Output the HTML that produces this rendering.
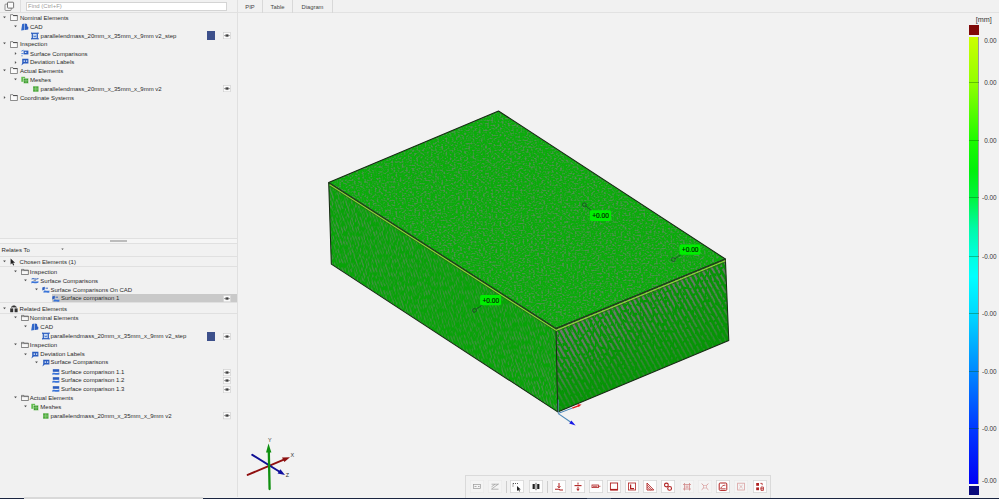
<!DOCTYPE html>
<html><head><meta charset="utf-8"><title>Inspection</title>
<style>
html,body{margin:0;padding:0}
body{width:999px;height:499px;overflow:hidden;position:relative;background:#f2f2f2;font-family:"Liberation Sans",sans-serif;font-size:6px;color:#222}
.ab{position:absolute;display:block}
.t{position:absolute;white-space:nowrap;font-size:6px;line-height:9px;height:9px;color:#2a2a2a}
.lt{position:absolute;left:976px;width:20.6px;text-align:right;font-size:6.4px;line-height:8px;height:8px;color:#333;white-space:nowrap}
#left{position:absolute;left:0;top:0;width:237px;height:497px;background:#f1f1f1;border-right:1px solid #e0e0e0;box-sizing:content-box}
.hl{position:absolute;left:0;width:237px;height:1px;background:#e0e0e0}
.tab{position:absolute;top:0;height:12.5px;line-height:14px;font-size:5.8px;text-align:center;color:#444;border-right:1px solid #d8d8d8;box-sizing:border-box}
</style></head><body>
<div id="left"></div>
<!-- top search -->
<svg class="ab" style="left:3.5px;top:1px" width="11" height="11" viewBox="0 0 11 11"><rect x="1" y="3.1" width="6.2" height="6.4" rx="0.8" fill="#f4f4f4" stroke="#6a6a6a" stroke-width="0.7"/><rect x="3.5" y="1.2" width="6.1" height="5.9" rx="0.6" fill="#fafafa" stroke="#666" stroke-width="0.9"/></svg>
<div class="ab" style="left:20.2px;top:0;width:1px;height:12.5px;background:#dedede"></div>
<div class="ab" style="left:25.8px;top:1.8px;width:201.4px;height:9.7px;background:#fff;border:0.8px solid #d4d4d4;box-sizing:border-box"></div>
<div class="t" style="left:28px;top:2px;color:#9a9a9a">Find (Ctrl+F)</div>
<div class="hl" style="top:12px"></div>
<!-- tabs -->
<div class="ab" style="left:238px;top:0;width:761px;height:12.6px;background:#f1f1f1;border-bottom:1px solid #e2e2e2;box-sizing:border-box"></div>
<div class="tab" style="left:238px;width:25px">PIP</div>
<div class="tab" style="left:263px;width:30px">Table</div>
<div class="tab" style="left:293px;width:40px">Diagram</div>
<!-- panel divider lines -->
<div class="hl" style="top:238px"></div>

<div class="hl" style="top:243px"></div>
<div class="ab" style="left:0;top:239px;width:237px;height:4px;background:#f5f5f5"></div>
<div class="ab" style="left:110px;top:240px;width:16.7px;height:1.8px;background:#bcbcbc"></div>
<div class="t" style="left:1.6px;top:245.5px">Relates To</div>
<svg class="ab" style="left:59.6px;top:247.4px" width="5" height="5" viewBox="0 0 5 5"><path d="M1.3 1.5 L3.7 1.5 L2.5 3 Z" fill="#555"/></svg>
<div class="hl" style="top:255.9px"></div>
<div class="hl" style="top:266.3px"></div>
<div class="hl" style="top:302.1px"></div>
<div class="hl" style="top:313.4px"></div>
<svg class="ab" style="left:2.4px;top:14.9px" width="5" height="5" viewBox="0 0 5 5"><path d="M1.1 1.6 L3.9 1.6 L2.5 3.3 Z" fill="#4a4a4a"/></svg>
<svg class="ab" style="left:10.2px;top:14.0px" width="8" height="8" viewBox="0 0 8 8"><path d="M0.4 0.7 H3 L3.5 1.5 H7.4 V6.5 H0.4 Z" fill="#fbfbfb" stroke="#606060" stroke-width="0.7"/><path d="M3 1.6 H7.4" stroke="#444" stroke-width="0.9"/></svg>
<div class="t" style="left:19.9px;top:13.5px">Nominal Elements</div>
<svg class="ab" style="left:12.9px;top:23.8px" width="5" height="5" viewBox="0 0 5 5"><path d="M1.1 1.6 L3.9 1.6 L2.5 3.3 Z" fill="#4a4a4a"/></svg>
<svg class="ab" style="left:20.9px;top:22.9px" width="8" height="8" viewBox="0 0 8 8"><path d="M1.2 0.9 L3.5 0.6 L3.5 6.9 L0.2 7.5 Z" fill="#3068cc"/><path d="M4 0.5 L6 0.9 L6.4 3.6 L7.4 4 L7.2 6.4 L4 6.9 Z" fill="#2a5cc0"/></svg>
<div class="t" style="left:29.9px;top:22.8px">CAD</div>
<svg class="ab" style="left:31.1px;top:31.7px" width="8" height="8" viewBox="0 0 8 8"><rect x="1.3" y="1.3" width="5" height="5.4" fill="#c9dcf4" stroke="#2a5cc0" stroke-width="1.2"/><path d="M0.4 0.5 V2 M7.2 0.5 V2 M0.4 6 V7.5 M7.2 6 V7.5" stroke="#2a5cc0" stroke-width="0.9"/><path d="M2.9 3.6 V4.6 H4.7 V3.6" stroke="#2a5cc0" stroke-width="0.7" fill="none"/></svg>
<div class="t" style="left:40.6px;top:31.7px">parallelendmass_20mm_x_35mm_x_9mm v2_step</div>
<div class="ab" style="left:206.7px;top:31.3px;width:8.8px;height:8.8px;background:#3d508b"></div>
<svg class="ab" style="left:223.1px;top:32.1px" width="8" height="7.2" viewBox="0 0 8 7.2"><rect x="0.35" y="0.35" width="7.3" height="6.5" fill="#fbfbfb" stroke="#d0d0d0" stroke-width="0.7"/><path d="M1.4 3.6 C2.6 2.2, 5.4 2.2, 6.6 3.6 C5.4 5, 2.6 5, 1.4 3.6 Z" fill="#8a8a8a" stroke="#555" stroke-width="0.4"/><circle cx="4.1" cy="3.6" r="1" fill="#3a3a3a"/></svg>
<svg class="ab" style="left:2.4px;top:41.4px" width="5" height="5" viewBox="0 0 5 5"><path d="M1.1 1.6 L3.9 1.6 L2.5 3.3 Z" fill="#4a4a4a"/></svg>
<svg class="ab" style="left:10.2px;top:40.5px" width="8" height="8" viewBox="0 0 8 8"><path d="M0.4 0.7 H3 L3.5 1.5 H7.4 V6.5 H0.4 Z" fill="#fbfbfb" stroke="#606060" stroke-width="0.7"/><path d="M3 1.6 H7.4" stroke="#444" stroke-width="0.9"/></svg>
<div class="t" style="left:19.9px;top:40.0px">Inspection</div>
<svg class="ab" style="left:12.9px;top:50.9px" width="5" height="5" viewBox="0 0 5 5"><path d="M1.9 1.1 L3.5 2.5 L1.9 3.9 Z" fill="#555"/></svg>
<svg class="ab" style="left:20.9px;top:49.4px" width="8" height="8" viewBox="0 0 8 8"><path d="M2.6 1.6 H7.4 V5.4 H2.6 Z" fill="#2a5cc0"/><rect x="3.8" y="2.8" width="1.6" height="1.2" fill="#d8e6f8"/><path d="M0.4 2.2 L2.6 1.2 M0.4 4.6 H2.4 M0.4 6.8 H1.6" stroke="#3a74d8" stroke-width="0.9"/></svg>
<div class="t" style="left:29.9px;top:49.6px">Surface Comparisons</div>
<svg class="ab" style="left:12.9px;top:59.8px" width="5" height="5" viewBox="0 0 5 5"><path d="M1.9 1.1 L3.5 2.5 L1.9 3.9 Z" fill="#555"/></svg>
<svg class="ab" style="left:20.9px;top:58.2px" width="8" height="8" viewBox="0 0 8 8"><path d="M1.2 0.8 H7.4 V5.4 H2.8 L0.4 7.6 L1.2 5 Z" fill="#2a5cc0"/><rect x="2.6" y="2.4" width="1.4" height="1.4" fill="#dfe9f8"/><rect x="4.9" y="2.4" width="1.4" height="1.4" fill="#dfe9f8"/></svg>
<div class="t" style="left:29.9px;top:57.8px">Deviation Labels</div>
<svg class="ab" style="left:2.4px;top:68.0px" width="5" height="5" viewBox="0 0 5 5"><path d="M1.1 1.6 L3.9 1.6 L2.5 3.3 Z" fill="#4a4a4a"/></svg>
<svg class="ab" style="left:10.2px;top:67.1px" width="8" height="8" viewBox="0 0 8 8"><path d="M0.4 0.7 H3 L3.5 1.5 H7.4 V6.5 H0.4 Z" fill="#fbfbfb" stroke="#606060" stroke-width="0.7"/><path d="M3 1.6 H7.4" stroke="#444" stroke-width="0.9"/></svg>
<div class="t" style="left:19.9px;top:66.6px">Actual Elements</div>
<svg class="ab" style="left:12.9px;top:76.8px" width="5" height="5" viewBox="0 0 5 5"><path d="M1.1 1.6 L3.9 1.6 L2.5 3.3 Z" fill="#4a4a4a"/></svg>
<svg class="ab" style="left:20.9px;top:75.9px" width="8" height="8" viewBox="0 0 8 8"><rect x="0.3" y="0.8" width="3.8" height="5" fill="#62bc50"/><rect x="2.6" y="2.2" width="4.8" height="5.2" fill="#3c9c2e" stroke="#e8f4e4" stroke-width="0.45"/><path d="M5 2.2 V7.4 M2.6 4.8 H7.4" stroke="#bfe6b6" stroke-width="0.45"/></svg>
<div class="t" style="left:29.9px;top:76.2px">Meshes</div>
<svg class="ab" style="left:31.9px;top:84.8px" width="8" height="8" viewBox="0 0 8 8"><rect x="1.1" y="1.3" width="5.4" height="5.4" fill="#4ca83c"/><path d="M3.8 1.3 V6.7 M1.1 4 H6.5" stroke="#a8dc9c" stroke-width="0.55"/></svg>
<div class="t" style="left:40.6px;top:85.1px">parallelendmass_20mm_x_35mm_x_9mm v2</div>
<svg class="ab" style="left:223.1px;top:85.2px" width="8" height="7.2" viewBox="0 0 8 7.2"><rect x="0.35" y="0.35" width="7.3" height="6.5" fill="#fbfbfb" stroke="#d0d0d0" stroke-width="0.7"/><path d="M1.4 3.6 C2.6 2.2, 5.4 2.2, 6.6 3.6 C5.4 5, 2.6 5, 1.4 3.6 Z" fill="#8a8a8a" stroke="#555" stroke-width="0.4"/><circle cx="4.1" cy="3.6" r="1" fill="#3a3a3a"/></svg>
<svg class="ab" style="left:2.4px;top:95.1px" width="5" height="5" viewBox="0 0 5 5"><path d="M1.9 1.1 L3.5 2.5 L1.9 3.9 Z" fill="#555"/></svg>
<svg class="ab" style="left:10.2px;top:93.6px" width="8" height="8" viewBox="0 0 8 8"><path d="M0.4 0.7 H3 L3.5 1.5 H7.4 V6.5 H0.4 Z" fill="#fbfbfb" stroke="#606060" stroke-width="0.7"/><path d="M3 1.6 H7.4" stroke="#444" stroke-width="0.9"/></svg>
<div class="t" style="left:19.9px;top:94.0px">Coordinate Systems</div>
<svg class="ab" style="left:2.3px;top:259.3px" width="5" height="5" viewBox="0 0 5 5"><path d="M1.1 1.6 L3.9 1.6 L2.5 3.3 Z" fill="#4a4a4a"/></svg>
<svg class="ab" style="left:10.4px;top:258.4px" width="8" height="8" viewBox="0 0 8 8"><path d="M0.6 0.5 L0.6 6.4 L2.1 5.1 L3.2 7.5 L4.2 7.1 L3.1 4.7 L5.1 4.7 Z" fill="#222"/></svg>
<div class="t" style="left:19.6px;top:257.9px">Chosen Elements (1)</div>
<svg class="ab" style="left:12.9px;top:269.0px" width="5" height="5" viewBox="0 0 5 5"><path d="M1.1 1.6 L3.9 1.6 L2.5 3.3 Z" fill="#4a4a4a"/></svg>
<svg class="ab" style="left:20.7px;top:268.1px" width="8" height="8" viewBox="0 0 8 8"><path d="M0.4 1.4 H2.8 V2.1 H7.4 V6.5 H0.4 Z" fill="#f7f7f7" stroke="#3a3a3a" stroke-width="0.6"/><path d="M0.4 2.6 H7.4" stroke="#3a3a3a" stroke-width="0.5"/></svg>
<div class="t" style="left:29.8px;top:267.6px">Inspection</div>
<svg class="ab" style="left:23.2px;top:278.2px" width="5" height="5" viewBox="0 0 5 5"><path d="M1.1 1.6 L3.9 1.6 L2.5 3.3 Z" fill="#4a4a4a"/></svg>
<svg class="ab" style="left:31.0px;top:277.3px" width="8" height="8" viewBox="0 0 8 8"><path d="M0.6 2 C2.4 0.8, 4.4 3, 7.4 1.6" stroke="#2a5cc0" stroke-width="1" fill="none"/><path d="M0.4 4.6 C2.4 3.4, 4.6 5.4, 7.4 4 L7.4 5.8 C4.6 7, 2.4 5.2, 0.4 6.4 Z" fill="#3a74d8"/><path d="M2.6 3.3 H5" stroke="#444" stroke-width="0.6"/></svg>
<div class="t" style="left:40.3px;top:276.8px">Surface Comparisons</div>
<svg class="ab" style="left:33.6px;top:287.0px" width="5" height="5" viewBox="0 0 5 5"><path d="M1.1 1.6 L3.9 1.6 L2.5 3.3 Z" fill="#4a4a4a"/></svg>
<svg class="ab" style="left:41.5px;top:286.1px" width="8" height="8" viewBox="0 0 8 8"><path d="M0.3 1.6 L2.8 0.8 L2.8 3.6 L0.3 4.4 Z" fill="#2a5cc0"/><path d="M1.6 4.9 C3.4 3.8, 5.4 5.6, 7.4 4.4 L7.4 6.4 C5.4 7.4, 3.4 5.8, 1.6 7 Z" fill="#3a74d8"/><path d="M3.6 2.2 H6" stroke="#2a5cc0" stroke-width="0.9"/></svg>
<div class="t" style="left:50.5px;top:285.6px">Surface Comparisons On CAD</div>
<div class="ab" style="left:52px;top:294.3px;width:185px;height:8px;background:#c9c9c9"></div>
<svg class="ab" style="left:51.8px;top:294.8px" width="8" height="8" viewBox="0 0 8 8"><path d="M0.3 1.6 L2.8 0.8 L2.8 3.6 L0.3 4.4 Z" fill="#2a5cc0"/><path d="M1.6 4.9 C3.4 3.8, 5.4 5.6, 7.4 4.4 L7.4 6.4 C5.4 7.4, 3.4 5.8, 1.6 7 Z" fill="#3a74d8"/><path d="M3.6 2.2 H6" stroke="#2a5cc0" stroke-width="0.9"/></svg>
<div class="t" style="left:61.0px;top:294.3px">Surface comparison 1</div>
<svg class="ab" style="left:223.1px;top:295.2px" width="8" height="7.2" viewBox="0 0 8 7.2"><rect x="0.35" y="0.35" width="7.3" height="6.5" fill="#fbfbfb" stroke="#d0d0d0" stroke-width="0.7"/><path d="M1.4 3.6 C2.6 2.2, 5.4 2.2, 6.6 3.6 C5.4 5, 2.6 5, 1.4 3.6 Z" fill="#8a8a8a" stroke="#555" stroke-width="0.4"/><circle cx="4.1" cy="3.6" r="1" fill="#3a3a3a"/></svg>
<svg class="ab" style="left:2.3px;top:305.9px" width="5" height="5" viewBox="0 0 5 5"><path d="M1.1 1.6 L3.9 1.6 L2.5 3.3 Z" fill="#4a4a4a"/></svg>
<svg class="ab" style="left:10.4px;top:305.0px" width="8" height="8" viewBox="0 0 8 8"><path d="M1.8 3 V1.5 H6 V3" stroke="#333" stroke-width="0.8" fill="none"/><rect x="0.2" y="3.4" width="3" height="3.8" fill="#333"/><rect x="4.6" y="3.4" width="3" height="3.8" fill="#333"/><rect x="2.6" y="0.5" width="2.6" height="1.9" fill="#333"/></svg>
<div class="t" style="left:19.6px;top:304.5px">Related Elements</div>
<svg class="ab" style="left:12.9px;top:315.1px" width="5" height="5" viewBox="0 0 5 5"><path d="M1.1 1.6 L3.9 1.6 L2.5 3.3 Z" fill="#4a4a4a"/></svg>
<svg class="ab" style="left:20.7px;top:314.2px" width="8" height="8" viewBox="0 0 8 8"><path d="M0.4 1.4 H2.8 V2.1 H7.4 V6.5 H0.4 Z" fill="#f7f7f7" stroke="#3a3a3a" stroke-width="0.6"/><path d="M0.4 2.6 H7.4" stroke="#3a3a3a" stroke-width="0.5"/></svg>
<div class="t" style="left:29.8px;top:313.7px">Nominal Elements</div>
<svg class="ab" style="left:23.2px;top:324.3px" width="5" height="5" viewBox="0 0 5 5"><path d="M1.1 1.6 L3.9 1.6 L2.5 3.3 Z" fill="#4a4a4a"/></svg>
<svg class="ab" style="left:31.0px;top:323.4px" width="8" height="8" viewBox="0 0 8 8"><path d="M1.2 0.9 L3.5 0.6 L3.5 6.9 L0.2 7.5 Z" fill="#3068cc"/><path d="M4 0.5 L6 0.9 L6.4 3.6 L7.4 4 L7.2 6.4 L4 6.9 Z" fill="#2a5cc0"/></svg>
<div class="t" style="left:40.3px;top:322.9px">CAD</div>
<svg class="ab" style="left:41.5px;top:332.3px" width="8" height="8" viewBox="0 0 8 8"><rect x="1.3" y="1.3" width="5" height="5.4" fill="#c9dcf4" stroke="#2a5cc0" stroke-width="1.2"/><path d="M0.4 0.5 V2 M7.2 0.5 V2 M0.4 6 V7.5 M7.2 6 V7.5" stroke="#2a5cc0" stroke-width="0.9"/><path d="M2.9 3.6 V4.6 H4.7 V3.6" stroke="#2a5cc0" stroke-width="0.7" fill="none"/></svg>
<div class="t" style="left:50.5px;top:331.8px">parallelendmass_20mm_x_35mm_x_9mm v2_step</div>
<div class="ab" style="left:206.7px;top:331.9px;width:8.8px;height:8.8px;background:#3d508b"></div>
<svg class="ab" style="left:223.1px;top:332.7px" width="8" height="7.2" viewBox="0 0 8 7.2"><rect x="0.35" y="0.35" width="7.3" height="6.5" fill="#fbfbfb" stroke="#d0d0d0" stroke-width="0.7"/><path d="M1.4 3.6 C2.6 2.2, 5.4 2.2, 6.6 3.6 C5.4 5, 2.6 5, 1.4 3.6 Z" fill="#8a8a8a" stroke="#555" stroke-width="0.4"/><circle cx="4.1" cy="3.6" r="1" fill="#3a3a3a"/></svg>
<svg class="ab" style="left:12.9px;top:341.9px" width="5" height="5" viewBox="0 0 5 5"><path d="M1.1 1.6 L3.9 1.6 L2.5 3.3 Z" fill="#4a4a4a"/></svg>
<svg class="ab" style="left:20.7px;top:341.0px" width="8" height="8" viewBox="0 0 8 8"><path d="M0.4 1.4 H2.8 V2.1 H7.4 V6.5 H0.4 Z" fill="#f7f7f7" stroke="#3a3a3a" stroke-width="0.6"/><path d="M0.4 2.6 H7.4" stroke="#3a3a3a" stroke-width="0.5"/></svg>
<div class="t" style="left:29.8px;top:340.5px">Inspection</div>
<svg class="ab" style="left:23.2px;top:351.5px" width="5" height="5" viewBox="0 0 5 5"><path d="M1.1 1.6 L3.9 1.6 L2.5 3.3 Z" fill="#4a4a4a"/></svg>
<svg class="ab" style="left:31.0px;top:350.6px" width="8" height="8" viewBox="0 0 8 8"><path d="M1.2 0.8 H7.4 V5.4 H2.8 L0.4 7.6 L1.2 5 Z" fill="#2a5cc0"/><rect x="2.6" y="2.4" width="1.4" height="1.4" fill="#dfe9f8"/><rect x="4.9" y="2.4" width="1.4" height="1.4" fill="#dfe9f8"/></svg>
<div class="t" style="left:40.3px;top:350.1px">Deviation Labels</div>
<svg class="ab" style="left:33.6px;top:359.6px" width="5" height="5" viewBox="0 0 5 5"><path d="M1.1 1.6 L3.9 1.6 L2.5 3.3 Z" fill="#4a4a4a"/></svg>
<svg class="ab" style="left:41.5px;top:358.7px" width="8" height="8" viewBox="0 0 8 8"><path d="M1.2 0.8 H7.4 V5.4 H2.8 L0.4 7.6 L1.2 5 Z" fill="#2a5cc0"/><rect x="2.6" y="2.4" width="1.4" height="1.4" fill="#dfe9f8"/><rect x="4.9" y="2.4" width="1.4" height="1.4" fill="#dfe9f8"/></svg>
<div class="t" style="left:50.5px;top:358.2px">Surface Comparisons</div>
<svg class="ab" style="left:51.8px;top:368.1px" width="8" height="8" viewBox="0 0 8 8"><path d="M0.8 1.2 H7.2 V3.8 H0.8 Z" fill="#2a5cc0"/><path d="M0.4 5 C2.6 3.9, 4.6 5.8, 7.4 4.6 L7.4 6.4 C4.6 7.4, 2.6 5.8, 0.4 6.9 Z" fill="#3a74d8"/></svg>
<div class="t" style="left:61.0px;top:367.6px">Surface comparison 1.1</div>
<svg class="ab" style="left:223.1px;top:368.5px" width="8" height="7.2" viewBox="0 0 8 7.2"><rect x="0.35" y="0.35" width="7.3" height="6.5" fill="#fbfbfb" stroke="#d0d0d0" stroke-width="0.7"/><path d="M1.4 3.6 C2.6 2.2, 5.4 2.2, 6.6 3.6 C5.4 5, 2.6 5, 1.4 3.6 Z" fill="#8a8a8a" stroke="#555" stroke-width="0.4"/><circle cx="4.1" cy="3.6" r="1" fill="#3a3a3a"/></svg>
<svg class="ab" style="left:51.8px;top:376.4px" width="8" height="8" viewBox="0 0 8 8"><path d="M0.8 1.2 H7.2 V3.8 H0.8 Z" fill="#2a5cc0"/><path d="M0.4 5 C2.6 3.9, 4.6 5.8, 7.4 4.6 L7.4 6.4 C4.6 7.4, 2.6 5.8, 0.4 6.9 Z" fill="#3a74d8"/></svg>
<div class="t" style="left:61.0px;top:375.9px">Surface comparison 1.2</div>
<svg class="ab" style="left:223.1px;top:376.8px" width="8" height="7.2" viewBox="0 0 8 7.2"><rect x="0.35" y="0.35" width="7.3" height="6.5" fill="#fbfbfb" stroke="#d0d0d0" stroke-width="0.7"/><path d="M1.4 3.6 C2.6 2.2, 5.4 2.2, 6.6 3.6 C5.4 5, 2.6 5, 1.4 3.6 Z" fill="#8a8a8a" stroke="#555" stroke-width="0.4"/><circle cx="4.1" cy="3.6" r="1" fill="#3a3a3a"/></svg>
<svg class="ab" style="left:51.8px;top:385.2px" width="8" height="8" viewBox="0 0 8 8"><path d="M0.8 1.2 H7.2 V3.8 H0.8 Z" fill="#2a5cc0"/><path d="M0.4 5 C2.6 3.9, 4.6 5.8, 7.4 4.6 L7.4 6.4 C4.6 7.4, 2.6 5.8, 0.4 6.9 Z" fill="#3a74d8"/></svg>
<div class="t" style="left:61.0px;top:384.7px">Surface comparison 1.3</div>
<svg class="ab" style="left:223.1px;top:385.6px" width="8" height="7.2" viewBox="0 0 8 7.2"><rect x="0.35" y="0.35" width="7.3" height="6.5" fill="#fbfbfb" stroke="#d0d0d0" stroke-width="0.7"/><path d="M1.4 3.6 C2.6 2.2, 5.4 2.2, 6.6 3.6 C5.4 5, 2.6 5, 1.4 3.6 Z" fill="#8a8a8a" stroke="#555" stroke-width="0.4"/><circle cx="4.1" cy="3.6" r="1" fill="#3a3a3a"/></svg>
<svg class="ab" style="left:12.9px;top:395.3px" width="5" height="5" viewBox="0 0 5 5"><path d="M1.1 1.6 L3.9 1.6 L2.5 3.3 Z" fill="#4a4a4a"/></svg>
<svg class="ab" style="left:20.7px;top:394.4px" width="8" height="8" viewBox="0 0 8 8"><path d="M0.4 1.4 H2.8 V2.1 H7.4 V6.5 H0.4 Z" fill="#f7f7f7" stroke="#3a3a3a" stroke-width="0.6"/><path d="M0.4 2.6 H7.4" stroke="#3a3a3a" stroke-width="0.5"/></svg>
<div class="t" style="left:29.8px;top:393.9px">Actual Elements</div>
<svg class="ab" style="left:23.2px;top:404.1px" width="5" height="5" viewBox="0 0 5 5"><path d="M1.1 1.6 L3.9 1.6 L2.5 3.3 Z" fill="#4a4a4a"/></svg>
<svg class="ab" style="left:31.0px;top:403.2px" width="8" height="8" viewBox="0 0 8 8"><rect x="0.3" y="0.8" width="3.8" height="5" fill="#62bc50"/><rect x="2.6" y="2.2" width="4.8" height="5.2" fill="#3c9c2e" stroke="#e8f4e4" stroke-width="0.45"/><path d="M5 2.2 V7.4 M2.6 4.8 H7.4" stroke="#bfe6b6" stroke-width="0.45"/></svg>
<div class="t" style="left:40.3px;top:402.7px">Meshes</div>
<svg class="ab" style="left:41.5px;top:412.0px" width="8" height="8" viewBox="0 0 8 8"><rect x="1.1" y="1.3" width="5.4" height="5.4" fill="#4ca83c"/><path d="M3.8 1.3 V6.7 M1.1 4 H6.5" stroke="#a8dc9c" stroke-width="0.55"/></svg>
<div class="t" style="left:50.5px;top:411.5px">parallelendmass_20mm_x_35mm_x_9mm v2</div>
<svg class="ab" style="left:223.1px;top:412.4px" width="8" height="7.2" viewBox="0 0 8 7.2"><rect x="0.35" y="0.35" width="7.3" height="6.5" fill="#fbfbfb" stroke="#d0d0d0" stroke-width="0.7"/><path d="M1.4 3.6 C2.6 2.2, 5.4 2.2, 6.6 3.6 C5.4 5, 2.6 5, 1.4 3.6 Z" fill="#8a8a8a" stroke="#555" stroke-width="0.4"/><circle cx="4.1" cy="3.6" r="1" fill="#3a3a3a"/></svg>
<!-- viewport -->
<svg class="ab" style="left:238px;top:13px" width="761" height="484" viewBox="238 13 761 484">
<defs>
<pattern id="pleft" width="2.8" height="20" patternUnits="userSpaceOnUse" patternTransform="skewX(20)">
<path d="M0.8 0 V20" stroke="#5a8a5a" stroke-width="1.3"/>
</pattern>
<pattern id="pright" width="5.3" height="20" patternUnits="userSpaceOnUse" patternTransform="skewX(29)">
<path d="M1.4 0 V20" stroke="#777" stroke-width="1.9"/>
</pattern>
<pattern id="pright2" width="5.3" height="20" patternUnits="userSpaceOnUse" patternTransform="skewX(29)">
<path d="M1.4 0 V20" stroke="#747474" stroke-width="2.9"/>
</pattern>
<linearGradient id="gright2" gradientUnits="userSpaceOnUse" x1="610" y1="290" x2="650" y2="352"><stop offset="0" stop-color="#fff"/><stop offset="0.35" stop-color="#999"/><stop offset="0.8" stop-color="#000"/></linearGradient>
<mask id="mright2" maskUnits="userSpaceOnUse" x="320" y="100" width="420" height="320"><rect x="320" y="100" width="420" height="320" fill="url(#gright2)" filter="url(#nright)"/></mask>
<linearGradient id="gright" gradientUnits="userSpaceOnUse" x1="640" y1="294" x2="668.5" y2="363.4"><stop offset="0" stop-color="#fff"/><stop offset="0.45" stop-color="#ccc"/><stop offset="1" stop-color="#5a5a5a"/></linearGradient>
<linearGradient id="gleft" gradientUnits="userSpaceOnUse" x1="335" y1="200" x2="550" y2="400"><stop offset="0" stop-color="#fff"/><stop offset="0.6" stop-color="#bbb"/><stop offset="1" stop-color="#fff"/></linearGradient>
<filter id="ftop" filterUnits="userSpaceOnUse" x="320" y="100" width="420" height="320" color-interpolation-filters="sRGB">
<feTurbulence type="fractalNoise" baseFrequency="0.48 0.6" numOctaves="1" seed="4" result="n"/>
<feColorMatrix in="n" type="matrix" values="0 0 0 0 0.31  0 0 0 0 0.57  0 0 0 0 0.31  4 0 0 0 -1.85" result="sp"/>
<feComposite in="sp" in2="SourceAlpha" operator="in" result="spc"/>
<feMerge><feMergeNode in="SourceGraphic"/><feMergeNode in="spc"/></feMerge>
</filter>
<filter id="nleft" filterUnits="userSpaceOnUse" x="320" y="100" width="420" height="320" color-interpolation-filters="sRGB">
<feTurbulence type="fractalNoise" baseFrequency="0.5 0.22" numOctaves="1" seed="9" result="n"/>
<feColorMatrix in="n" type="matrix" values="0 0 0 0 1  0 0 0 0 1  0 0 0 0 1  5 0 0 0 -2.0" result="a"/>
<feComposite in="SourceGraphic" in2="a" operator="in"/>
</filter>
<filter id="nright" filterUnits="userSpaceOnUse" x="320" y="100" width="420" height="320" color-interpolation-filters="sRGB">
<feTurbulence type="fractalNoise" baseFrequency="0.4 0.3" numOctaves="1" seed="17" result="n"/>
<feColorMatrix in="n" type="matrix" values="0 0 0 0 1  0 0 0 0 1  0 0 0 0 1  6 0 0 0 -2.0" result="a"/>
<feComposite in="SourceGraphic" in2="a" operator="in"/>
</filter>
<mask id="mleft" maskUnits="userSpaceOnUse" x="320" y="100" width="420" height="320"><rect x="320" y="100" width="420" height="320" fill="url(#gleft)" filter="url(#nleft)"/></mask>
<mask id="mright" maskUnits="userSpaceOnUse" x="320" y="100" width="420" height="320"><rect x="320" y="100" width="420" height="320" fill="url(#gright)" filter="url(#nright)"/></mask>
</defs>
<!-- box faces -->
<polygon points="498.5,111 725.4,259 556,328.6 328.7,182.6" fill="#0aac0a" filter="url(#ftop)"/>
<polygon points="328.7,182.6 556,328.6 557.7,411.9 331.3,264.1" fill="#08a308"/>
<polygon points="556,328.6 725.4,259 728.8,340.4 557.7,411.9" fill="#059505"/>
<g mask="url(#mleft)"><polygon points="328.7,182.6 556,328.6 557.7,411.9 331.3,264.1" fill="url(#pleft)"/></g>
<g mask="url(#mright)"><polygon points="556,328.6 725.4,259 728.8,340.4 557.7,411.9" fill="url(#pright)"/></g>
<g mask="url(#mright2)"><polygon points="556,328.6 725.4,259 728.8,340.4 557.7,411.9" fill="url(#pright2)"/></g>
<!-- edges -->
<g fill="none" stroke="#172a14" stroke-width="1.05" stroke-linejoin="round">
<polygon points="498.5,111 725.4,259 728.8,340.4 557.7,411.9 331.3,264.1 328.7,182.6"/>
<path d="M328.7 182.6 L556 328.6 L725.4 259 M556 328.6 L557.7 411.9"/>
</g>
<path d="M328.7 182.6 L556 328.6 L725.4 259" fill="none" stroke="#22401e" stroke-width="1.25"/>
<path d="M329.6 184.8 L556.2 330.4 L725.4 260.8" fill="none" stroke="#94d03a" stroke-width="1.2"/>
<path d="M330 186 L556.3 331.6 L725.6 262" fill="none" stroke="#2a5a1a" stroke-width="0.6"/>
<!-- small origin axes -->
<path d="M558.3 399.5 V413.6" stroke="#5c8fb0" stroke-width="1" opacity="0.85"/>
<path d="M558.3 413.6 L570.5 422" stroke="#4a86b8" stroke-width="1.1"/>
<path d="M575.6 425.4 L569.2 423.4 L571.4 420.6 Z" fill="#1818e6"/>
<path d="M558.3 413.4 L572.3 408.1" stroke="#4a86b8" stroke-width="1"/>
<path d="M572.3 408.1 L579 405.6" stroke="#e01818" stroke-width="1.3"/>
<path d="M581.6 404.4 L577.4 404.2 L578.6 407 Z" fill="#e01818"/>
<!-- labels -->
<g stroke="#223" stroke-width="0.6" fill="none">
<circle cx="584.4" cy="204.7" r="1.9"/><path d="M585.8 206 L591.5 210.5"/>
<circle cx="673.3" cy="259.6" r="1.9"/><path d="M675 258.6 L681 254.6"/>
<circle cx="474.4" cy="310.4" r="1.9"/><path d="M476 309.2 L482.5 305"/>
</g>
<g fill="#00ee00">
<rect x="589.8" y="210.3" width="21.3" height="10.6" rx="1.6"/>
<rect x="679.6" y="244.6" width="20.8" height="10.2" rx="1.6"/>
<rect x="480.1" y="295" width="21" height="10.2" rx="1.6"/>
</g>
<g font-family="Liberation Sans, sans-serif" font-size="6.6" fill="#041804" stroke="#041804" stroke-width="0.15" text-anchor="middle">
<text x="600.6" y="218">+0.00</text>
<text x="690.2" y="252.1">+0.00</text>
<text x="490.8" y="302.5">+0.00</text>
</g>
<!-- triad -->
<g stroke-linecap="round">
<path d="M247.7 474.9 L285 459.2" stroke="#901010" stroke-width="2"/>
<path d="M290 457.2 L282 457.6 L284.4 462 Z" fill="#8c1010" stroke="none"/>
<path d="M252.3 454.9 L280 472" stroke="#101094" stroke-width="2"/>
<path d="M285 475 L277.6 473.6 L280.4 469.2 Z" fill="#1010a0" stroke="none"/>
<path d="M269.6 489 L268.8 451" stroke="#0f900f" stroke-width="2.3"/>
<path d="M268.5 443.6 L266 452.4 L271.4 452.4 Z" fill="#109010" stroke="none"/>
</g>
<g font-family="Liberation Sans, sans-serif" font-size="5.4" fill="#333" text-anchor="middle">
<text x="269.8" y="441.8">Y</text><text x="292.2" y="456.6">X</text><text x="287.4" y="476.6">Z</text>
</g>
</svg>
<!-- toolbar -->
<div class="ab" style="left:464.6px;top:474.9px;width:306.6px;height:23px;background:#f1f1f1;border:1px solid #dadada;border-bottom:none;box-sizing:border-box"></div>
<svg class="ab" style="left:469.5px;top:479.8px" width="14" height="13" viewBox="0 0 14 13"><rect x="0.4" y="0.4" width="13.2" height="12.2" fill="#f4f4f4" stroke="#ebebeb" stroke-width="0.8"/><rect x="3.5" y="4.5" width="7" height="4" fill="none" stroke="#999" stroke-width="0.7"/><path d="M4.5 6.5 H6.5 M8 6.5 H9.5" stroke="#999" stroke-width="0.8"/></svg>
<svg class="ab" style="left:488.0px;top:479.8px" width="14" height="13" viewBox="0 0 14 13"><rect x="0.4" y="0.4" width="13.2" height="12.2" fill="#f4f4f4" stroke="#ebebeb" stroke-width="0.8"/><path d="M3.5 9 L10.5 4 M3.5 4.2 H10.5 M3.5 9.2 H10.5 M3.5 6.8 L7 4.3" stroke="#999" stroke-width="0.7" fill="none"/></svg>
<svg class="ab" style="left:510.4px;top:479.8px" width="14" height="13" viewBox="0 0 14 13"><rect x="0.4" y="0.4" width="13.2" height="12.2" fill="#fdfdfd" stroke="#d6d6d6" stroke-width="0.8"/><path d="M3 3.5 H8 M3 3.5 V7" stroke="#333" stroke-width="0.8" stroke-dasharray="1 1" fill="none"/><path d="M7 6 L7 11 L8.3 9.9 L9.2 11.6 L10 11.2 L9.1 9.6 L10.8 9.6 Z" fill="#222"/></svg>
<svg class="ab" style="left:528.8px;top:479.8px" width="14" height="13" viewBox="0 0 14 13"><rect x="0.4" y="0.4" width="13.2" height="12.2" fill="#fdfdfd" stroke="#d6d6d6" stroke-width="0.8"/><rect x="3.6" y="4" width="2.2" height="5" fill="#222"/><rect x="8.2" y="4" width="2.2" height="5" fill="#222"/><path d="M7 2.8 V10.2" stroke="#222" stroke-width="0.7"/></svg>
<svg class="ab" style="left:551.9px;top:479.8px" width="14" height="13" viewBox="0 0 14 13"><rect x="0.4" y="0.4" width="13.2" height="12.2" fill="#fdfdfd" stroke="#d6d6d6" stroke-width="0.8"/><path d="M3 9.2 H7 L8 10 H11" stroke="#b02020" stroke-width="1.1" fill="none"/><path d="M7 3 V7.6 M5.6 6.2 L7 7.8 L8.4 6.2" stroke="#b02020" stroke-width="1" fill="none"/></svg>
<svg class="ab" style="left:570.5px;top:479.8px" width="14" height="13" viewBox="0 0 14 13"><rect x="0.4" y="0.4" width="13.2" height="12.2" fill="#fdfdfd" stroke="#d6d6d6" stroke-width="0.8"/><path d="M3.5 5.6 H10.5" stroke="#b02020" stroke-width="1.1"/><path d="M7 2.6 V4.6 M7 6.8 V10.4 M5.8 8.8 L7 10.4 L8.2 8.8" stroke="#b02020" stroke-width="1" fill="none"/></svg>
<svg class="ab" style="left:589.2px;top:479.8px" width="14" height="13" viewBox="0 0 14 13"><rect x="0.4" y="0.4" width="13.2" height="12.2" fill="#fdfdfd" stroke="#d6d6d6" stroke-width="0.8"/><rect x="3" y="5" width="6.4" height="2.6" fill="none" stroke="#b02020" stroke-width="0.8"/><path d="M4 6.3 H8.4 M9.4 6.3 H11.4" stroke="#b02020" stroke-width="0.8"/></svg>
<svg class="ab" style="left:606.5px;top:479.8px" width="14" height="13" viewBox="0 0 14 13"><rect x="0.4" y="0.4" width="13.2" height="12.2" fill="#fdfdfd" stroke="#d6d6d6" stroke-width="0.8"/><rect x="3.4" y="3" width="7.2" height="7" fill="#fff" stroke="#b02020" stroke-width="0.9"/><path d="M3.4 9.6 H10.6" stroke="#b02020" stroke-width="1.4"/></svg>
<svg class="ab" style="left:624.9px;top:479.8px" width="14" height="13" viewBox="0 0 14 13"><rect x="0.4" y="0.4" width="13.2" height="12.2" fill="#fdfdfd" stroke="#d6d6d6" stroke-width="0.8"/><rect x="3.4" y="3" width="7.2" height="7" fill="none" stroke="#b02020" stroke-width="0.8"/><path d="M5.6 4.6 V8.6 H9" stroke="#b02020" stroke-width="1.2" fill="none"/></svg>
<svg class="ab" style="left:643.1px;top:479.8px" width="14" height="13" viewBox="0 0 14 13"><rect x="0.4" y="0.4" width="13.2" height="12.2" fill="#fdfdfd" stroke="#d6d6d6" stroke-width="0.8"/><path d="M4 3 L4 10 L10.8 10 Z" fill="none" stroke="#b02020" stroke-width="0.9"/><path d="M4 7 L7.4 10 M4 5 L9 10" stroke="#b02020" stroke-width="0.7"/></svg>
<svg class="ab" style="left:661.1px;top:479.8px" width="14" height="13" viewBox="0 0 14 13"><rect x="0.4" y="0.4" width="13.2" height="12.2" fill="#fdfdfd" stroke="#d6d6d6" stroke-width="0.8"/><circle cx="5.4" cy="5" r="1.9" fill="none" stroke="#b02020" stroke-width="1.1"/><circle cx="8.6" cy="8.4" r="1.9" fill="none" stroke="#b02020" stroke-width="1.1"/></svg>
<svg class="ab" style="left:679.5px;top:479.8px" width="14" height="13" viewBox="0 0 14 13"><rect x="0.4" y="0.4" width="13.2" height="12.2" fill="#f4f4f4" stroke="#ebebeb" stroke-width="0.8"/><path d="M4.5 3 V10.5 M9.5 3 V10.5 M3 4.5 H11 M3 9 H11" stroke="#d08a8a" stroke-width="0.8" fill="none"/><rect x="5.5" y="5.4" width="3" height="2.8" fill="#e6b8b8"/></svg>
<svg class="ab" style="left:697.5px;top:479.8px" width="14" height="13" viewBox="0 0 14 13"><rect x="0.4" y="0.4" width="13.2" height="12.2" fill="#f4f4f4" stroke="#ebebeb" stroke-width="0.8"/><path d="M3.6 3.6 L5.6 5.4 M10.4 3.6 L8.4 5.4 M3.6 9.8 L5.6 8 M10.4 9.8 L8.4 8" stroke="#d08a8a" stroke-width="0.8"/><rect x="5.6" y="5.4" width="2.8" height="2.6" fill="none" stroke="#d9a0a0" stroke-width="0.6"/></svg>
<svg class="ab" style="left:716.0px;top:479.8px" width="14" height="13" viewBox="0 0 14 13"><rect x="0.4" y="0.4" width="13.2" height="12.2" fill="#fdfdfd" stroke="#d6d6d6" stroke-width="0.8"/><rect x="3.2" y="3" width="7.6" height="7.4" rx="1" fill="none" stroke="#b02020" stroke-width="1"/><path d="M4.6 8.6 C5.6 6, 7.6 5, 9.4 5.2 M4.6 8.8 H9.6" stroke="#b02020" stroke-width="0.8" fill="none"/></svg>
<svg class="ab" style="left:734.4px;top:479.8px" width="14" height="13" viewBox="0 0 14 13"><rect x="0.4" y="0.4" width="13.2" height="12.2" fill="#f4f4f4" stroke="#ebebeb" stroke-width="0.8"/><rect x="3.6" y="3.2" width="6.8" height="6.8" fill="none" stroke="#d9a0a0" stroke-width="0.8"/><path d="M5.4 5 L8.6 8.2 M8.6 5 L5.4 8.2" stroke="#d9a0a0" stroke-width="0.7"/></svg>
<svg class="ab" style="left:752.8px;top:479.8px" width="14" height="13" viewBox="0 0 14 13"><rect x="0.4" y="0.4" width="13.2" height="12.2" fill="#fdfdfd" stroke="#d6d6d6" stroke-width="0.8"/><rect x="3.2" y="3" width="2.8" height="2.8" fill="#b02020"/><rect x="3.2" y="7.4" width="2.8" height="2.8" fill="#b02020"/><path d="M7.4 3.4 H9.2 V5.2 M7.4 8.8 H10.6 M8 7 H10.4 V10.4 H8 Z" stroke="#b02020" stroke-width="0.8" fill="none"/></svg>
<div class="ab" style="left:506.0px;top:480.5px;width:1px;height:12px;background:#cdcdcd"></div>
<div class="ab" style="left:547.0px;top:480.5px;width:1px;height:12px;background:#cdcdcd"></div>
<!-- legend -->
<div class="ab" style="left:972px;top:15.6px;width:23.4px;text-align:center;font-size:7.2px;line-height:8px;color:#333">[mm]</div>
<div class="ab" style="left:969px;top:24.8px;width:10.4px;height:10px;background:#800a0a"></div>
<div class="ab" style="left:969px;top:36.5px;width:10.4px;height:447.3px;border-right:0.8px solid #9a9a9a;box-sizing:border-box;background:linear-gradient(to bottom,#ccff00 0%,#92ff00 10.3%,#1cfa00 23.3%,#00f00c 30%,#00f540 36%,#00faa8 42.8%,#00ffe0 49%,#00ffff 53.6%,#00d8ff 62%,#0088ff 74.8%,#0038ff 87.6%,#0000f4 100%)"></div>
<div class="ab" style="left:969px;top:485.6px;width:10.4px;height:9.8px;background:#0a0a7c"></div>
<div class="lt" style="top:37.1px">0.00</div>
<div class="lt" style="top:79.3px">0.00</div>
<div class="lt" style="top:137.3px">0.00</div>
<div class="lt" style="top:194.3px">-0.00</div>
<div class="lt" style="top:252.8px">-0.00</div>
<div class="lt" style="top:310.3px">-0.00</div>
<div class="lt" style="top:367.8px">-0.00</div>
<div class="lt" style="top:425.3px">-0.00</div>
<div class="lt" style="top:477.1px">-0.00</div>
<div class="ab" style="left:969px;top:82.2px;width:10.4px;height:0.7px;background:rgba(0,80,0,0.35)"></div>
<div class="ab" style="left:969px;top:140.2px;width:10.4px;height:0.7px;background:rgba(0,80,0,0.35)"></div>
<div class="ab" style="left:969px;top:197.2px;width:10.4px;height:0.7px;background:rgba(0,80,0,0.35)"></div>
<div class="ab" style="left:969px;top:255.7px;width:10.4px;height:0.7px;background:rgba(0,80,0,0.35)"></div>
<div class="ab" style="left:969px;top:313.2px;width:10.4px;height:0.7px;background:rgba(0,80,0,0.35)"></div>
<div class="ab" style="left:969px;top:370.7px;width:10.4px;height:0.7px;background:rgba(0,80,0,0.35)"></div>
<div class="ab" style="left:969px;top:428.2px;width:10.4px;height:0.7px;background:rgba(0,80,0,0.35)"></div>
<!-- bottom bar -->
<div class="ab" style="left:0;top:497.5px;width:999px;height:2px;background:#1a2540"></div>
<div class="ab" style="left:24px;top:497.3px;width:178.5px;height:2px;background:#d9d9d9"></div>
<div class="ab" style="left:587px;top:497.5px;width:23.5px;height:2px;background:#46556f"></div>
</body></html>
